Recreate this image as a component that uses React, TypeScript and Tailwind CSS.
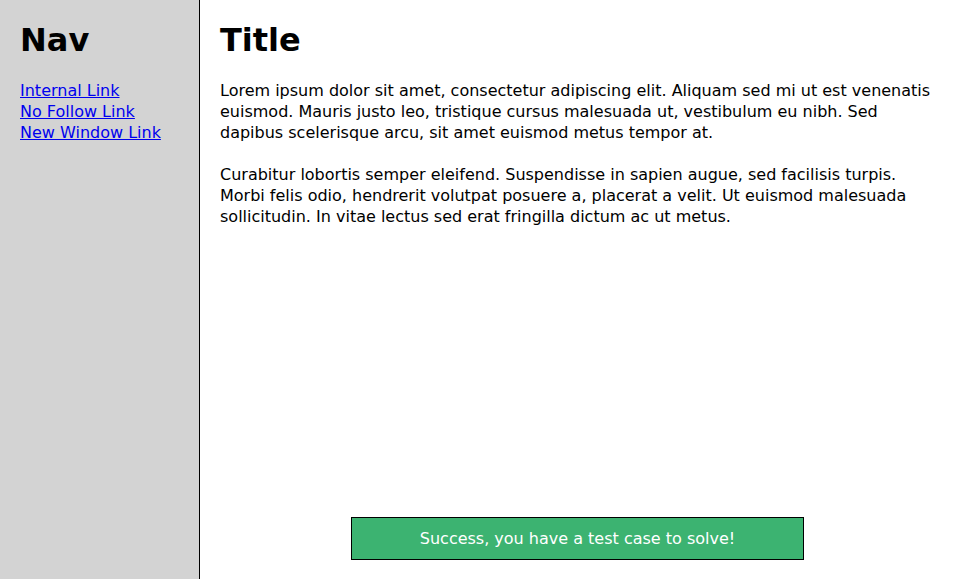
const links = ["Internal Link", "No Follow Link", "New Window Link"];

const paragraphs = [
  "Lorem ipsum dolor sit amet, consectetur adipiscing elit. Aliquam sed mi ut est venenatis euismod. Mauris justo leo, tristique cursus malesuada ut, vestibulum eu nibh. Sed dapibus scelerisque arcu, sit amet euismod metus tempor at.",
  "Curabitur lobortis semper eleifend. Suspendisse in sapien augue, sed facilisis turpis. Morbi felis odio, hendrerit volutpat posuere a, placerat a velit. Ut euismod malesuada sollicitudin. In vitae lectus sed erat fringilla dictum ac ut metus.",
];

export default function App() {
  return (
    <div className="flex h-screen w-full overflow-hidden bg-white text-black font-['Verdana','DejaVu_Sans',sans-serif] text-[16px] leading-[21px]">
      {/* Sidebar */}
      <nav className="w-[200px] shrink-0 bg-[#d3d3d3] border-r border-black px-5 pt-[20px]">
        <h1 className="text-[32px] leading-[40px] font-bold">Nav</h1>
        <ul className="mt-[20px]">
          {links.map((l) => (
            <li key={l}>
              <a href="#" className="text-[#0000ee] underline">
                {l}
              </a>
            </li>
          ))}
        </ul>
      </nav>

      {/* Main */}
      <main className="flex-1 flex flex-col px-5 pt-[20px] pb-[19px]">
        <h1 className="text-[32px] leading-[40px] font-bold">Title</h1>
        <div className="mt-[20px] flex flex-col gap-[21px]">
          {paragraphs.map((p, i) => (
            <p key={i}>{p}</p>
          ))}
        </div>
        <div className="mt-auto flex justify-center">
          <div className="w-[453px] h-[43px] flex items-center justify-center bg-[#3cb371] border border-black text-white">
            Success, you have a test case to solve!
          </div>
        </div>
      </main>
    </div>
  );
}
